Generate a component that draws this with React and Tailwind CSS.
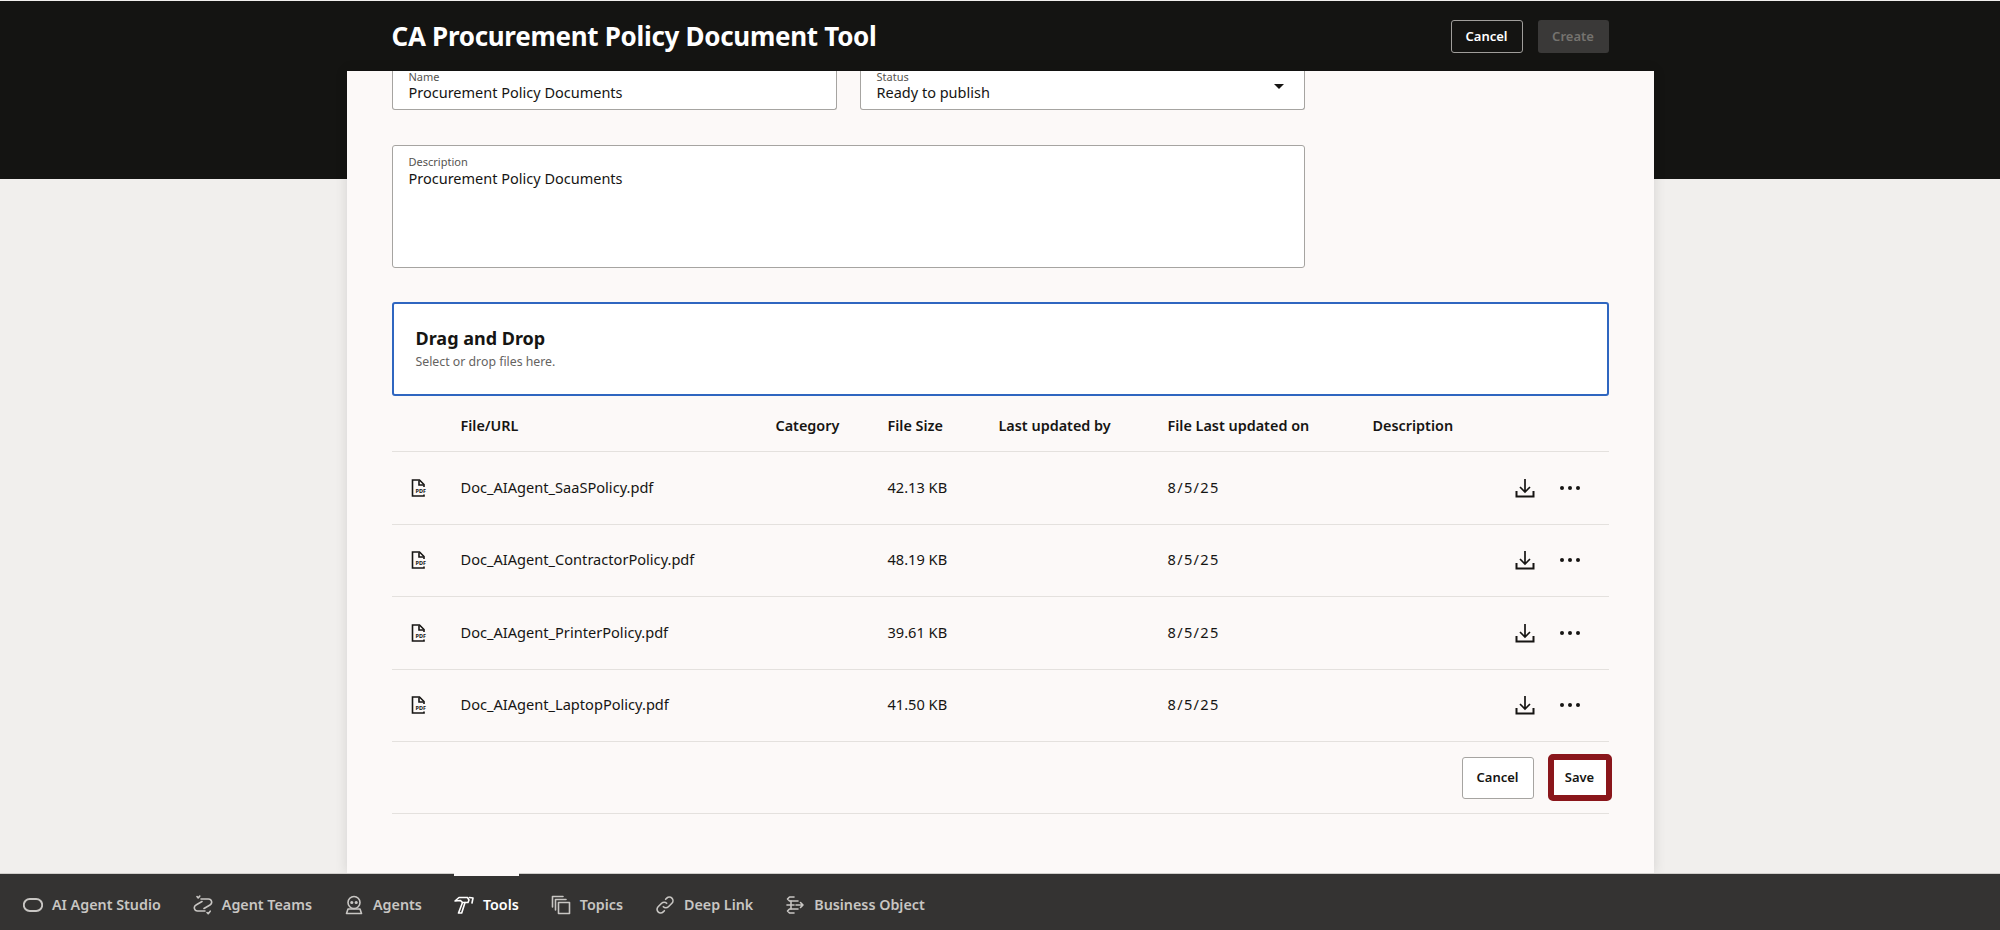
import React from "react";

const files = [
  { name: "Doc_AIAgent_SaaSPolicy.pdf", size: "42.13 KB" },
  { name: "Doc_AIAgent_ContractorPolicy.pdf", size: "48.19 KB" },
  { name: "Doc_AIAgent_PrinterPolicy.pdf", size: "39.61 KB" },
  { name: "Doc_AIAgent_LaptopPolicy.pdf", size: "41.50 KB" },
];

const columns = "grid grid-cols-[69px_315px_112px_111px_169px_205px_1fr] items-center";

function PdfIcon() {
  return (
    <svg width="20" height="20" viewBox="0 0 20 20" fill="none" className="ml-[17px]">
      <path d="M15 9V6.5L10.5 2H3.5v16H15v-1.5" stroke="#161513" strokeWidth="1.6" />
      <path d="M10 2.5V7h4.5" stroke="#161513" strokeWidth="1.6" />
      <rect x="6" y="9.5" width="13" height="6" fill="#fcf9f8" />
      <text x="6.5" y="15" fontSize="5.5" fontWeight="700" fill="#161513" fontFamily="Noto Sans, sans-serif">PDF</text>
    </svg>
  );
}

function DownloadIcon() {
  return (
    <svg width="20" height="20" viewBox="0 0 20 20" fill="none" stroke="#161513" className="shrink-0">
      <path d="M1.5 13v5.5h17V13" strokeWidth="2" />
      <path d="M10 1v13M5 9l5 5 5-5" strokeWidth="1.7" />
    </svg>
  );
}

function DotsIcon() {
  return (
    <svg width="22" height="6" viewBox="0 0 22 6" fill="#161513" className="shrink-0">
      <circle cx="3" cy="3" r="2" />
      <circle cx="11" cy="3" r="2" />
      <circle cx="19" cy="3" r="2" />
    </svg>
  );
}

function NavIcon({ children }) {
  return (
    <svg width="20" height="20" viewBox="0 0 20 20" fill="none" stroke="currentColor" strokeWidth="1.6" strokeLinecap="round" strokeLinejoin="round" className="shrink-0">
      {children}
    </svg>
  );
}

const navItems = [
  {
    label: "AI Agent Studio",
    icon: <rect x="0.8" y="4" width="18.4" height="12" rx="6" strokeWidth="1.9" />,
  },
  {
    label: "Agent Teams",
    icon: (
      <>
        <path d="M8 4h7.5a3.2 3.2 0 0 1 1.5 6l-6 3.5" />
        <path d="M12 16H4.5a3.2 3.2 0 0 1-1.5-6l6-3.5" />
        <path d="M4 1.5l1.2 1.5 1.6-2" />
        <path d="M14 17.5l1.2 1.2 2-2.5" />
      </>
    ),
  },
  {
    label: "Agents",
    icon: (
      <>
        <circle cx="10" cy="7.5" r="6" />
        <circle cx="7.8" cy="7.5" r="0.8" fill="currentColor" />
        <circle cx="12.2" cy="7.5" r="0.8" fill="currentColor" />
        <path d="M4 14h12l1.5 4.5h-15z" />
      </>
    ),
  },
  {
    label: "Tools",
    icon: (
      <>
        <path d="M1 6l4-3.5h8.5L15 5l-1 2.5H8.5L6.500 5.5z" />
        <path d="M8.5 7.5L4.5 18h3.2L11 7.5" />
        <path d="M15.5 2.5l3.5.5-1 5" />
      </>
    ),
  },
  {
    label: "Topics",
    icon: (
      <>
        <path d="M1.5 12V1.5H12" />
        <path d="M4.5 15V4.5H15" />
        <rect x="7.5" y="7.5" width="11" height="11" />
      </>
    ),
  },
  {
    label: "Deep Link",
    icon: (
      <>
        <path d="M8.3 11.7a3.6 3.6 0 0 0 5.1 0l3.5-3.5a3.6 3.6 0 0 0-5.1-5.1l-1.2 1.2" />
        <path d="M11.7 8.3a3.6 3.6 0 0 0-5.1 0l-3.5 3.5a3.6 3.6 0 0 0 5.1 5.1l1.2-1.2" />
      </>
    ),
  },
  {
    label: "Business Object",
    icon: (
      <>
        <path d="M9 2H4.5L2.5 4l2 2H13" />
        <path d="M9 10H2" />
        <path d="M9 18H4.5l-2-2 2-2H13" />
        <path d="M6 6v8" />
        <path d="M11 10h7M15.5 7.5L18 10l-2.5 2.5" />
      </>
    ),
  },
];

export default function App() {
  return (
    <div className="flex h-screen flex-col overflow-hidden bg-[#f1efed] font-['Noto_Sans',sans-serif] text-[#161513]">
      <header className="mt-px flex h-[70px] shrink-0 justify-center bg-[#141412]">
        <div className="flex w-[1307px] items-center justify-between px-[45px]">
          <h1 className="text-[26px] font-bold tracking-[-0.3px] text-white">CA Procurement Policy Document Tool</h1>
          <div className="flex gap-[15px] pt-px">
            <button className="h-[33px] w-[72px] rounded-[3px] border border-[#a09e9b] text-[13px] font-semibold text-white">Cancel</button>
            <button className="h-[33px] w-[71px] rounded-[3px] bg-[#3a3938] text-[13px] font-semibold text-[#75736f]">Create</button>
          </div>
        </div>
      </header>

      <main className="flex min-h-0 flex-1 justify-center bg-[linear-gradient(#141412_108px,#f1efed_108px)]">
        <div className="w-[1307px] bg-[#fcf9f8] px-[45px] shadow-[0_0_12px_rgba(0,0,0,0.12)]">
          <div className="flex w-[913px] justify-between">
            <div className="h-[39px] w-[445px] rounded-b-[3px] border border-t-0 border-[#a6a4a1] bg-white px-4">
              <div className="text-[11px] leading-[12px] text-[#55534f]">Name</div>
              <div className="text-[14.5px] leading-[19px]">Procurement Policy Documents</div>
            </div>
            <div className="relative h-[39px] w-[445px] rounded-b-[3px] border border-t-0 border-[#a6a4a1] bg-white px-4">
              <div className="text-[11px] leading-[12px] text-[#55534f]">Status</div>
              <div className="text-[14.5px] leading-[19px]">Ready to publish</div>
              <div className="absolute right-[20px] top-[13px] h-0 w-0 border-x-[5px] border-t-[5px] border-x-transparent border-t-[#161513]" />
            </div>
          </div>

          <div className="mt-[35px] h-[123px] w-[913px] rounded-[3px] border border-[#a6a4a1] bg-white px-4 pt-[9px]">
            <div className="text-[11px] leading-[14px] text-[#55534f]">Description</div>
            <div className="text-[14.5px] leading-[18px]">Procurement Policy Documents</div>
          </div>

          <div className="mt-[34px] h-[94px] rounded-[3px] border-2 border-[#2f66c0] bg-white px-[22px] pt-[20px]">
            <div className="text-[18px] font-bold leading-[28px]">Drag and Drop</div>
            <div className="text-[12.3px] leading-[20px] text-[#65635f]">Select or drop files here.</div>
          </div>

          <div className={`${columns} h-[56px] border-b border-[#e4e1de] pt-[5px] text-[14.4px] font-semibold`}>
            <div />
            <div>File/URL</div>
            <div>Category</div>
            <div>File Size</div>
            <div>Last updated by</div>
            <div>File Last updated on</div>
            <div>Description</div>
          </div>

          {files.map((f) => (
            <div key={f.name} className={`${columns} h-[72.5px] border-b border-[#e4e1de] text-[14.6px]`}>
              <PdfIcon />
              <div>{f.name}</div>
              <div />
              <div>{f.size}</div>
              <div />
              <div className="tracking-[1.3px]">8/5/25</div>
              <div className="col-start-7 flex items-center justify-end gap-[24px] pr-[28px]">
                <DownloadIcon />
                <DotsIcon />
              </div>
            </div>
          ))}

          <div className="flex h-[72px] items-center justify-end gap-[14px] border-b border-[#e4e1de] text-[13px] font-semibold">
            <button className="h-[42px] w-[72px] rounded-[3px] border border-[#a6a4a1] bg-white">Cancel</button>
            <button className="-mr-[3px] h-[47px] w-[64px] rounded-[5px] border-[6px] border-[#8a161b] bg-white">Save</button>
          </div>
        </div>
      </main>

      <nav className="flex h-[57px] shrink-0 items-center gap-[32px] border-t border-[#d0cecb] bg-[#343332] pl-[23px] pt-[5px] text-[14.3px] font-semibold text-[#c8c6c3]">
        {navItems.map((item) => (
          <div key={item.label} className={`relative flex items-center gap-[9px] ${item.label === "Tools" ? "text-white" : ""}`}>
            <NavIcon>{item.icon}</NavIcon>
            <span>{item.label}</span>
            {item.label === "Tools" && <div className="absolute -top-[21px] left-0 h-[3px] w-full bg-[#fcf9f8]" />}
          </div>
        ))}
      </nav>
    </div>
  );
}
